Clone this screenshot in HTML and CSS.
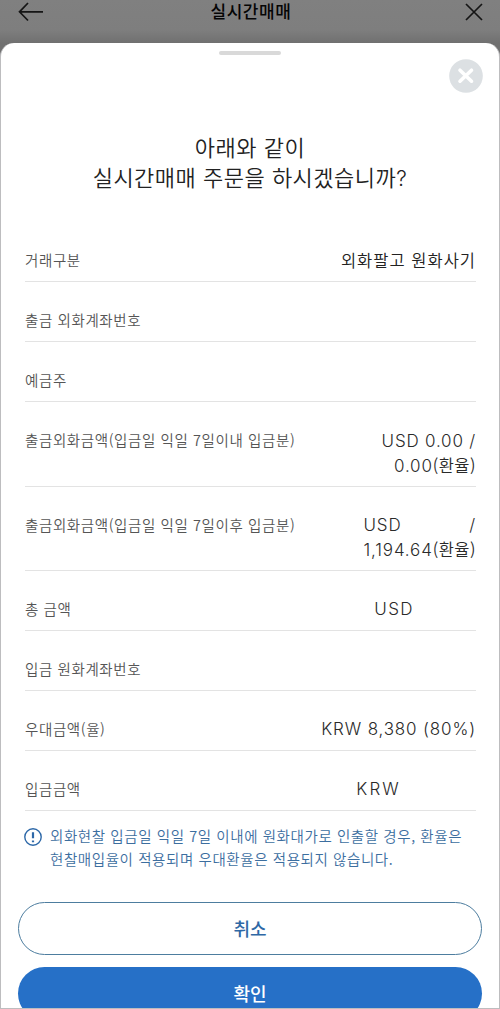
FILE: index.html
```html
<!DOCTYPE html>
<html lang="ko">
<head>
  <meta charset="UTF-8">
  <meta name="viewport" content="width=device-width, initial-scale=1.0">
  <title>실시간매매</title>
  <link rel="stylesheet" href="styles.css">
</head>
<body>

  <div class="screen">
    <header class="top-bar">
      <svg class="back-icon" width="26" height="20" viewBox="0 0 26 20"><path d="M10 1L1.5 9.8L10 18.5M1.5 9.8H25"/></svg>
      <h1>실시간매매</h1>
      <svg class="exit-icon" width="18" height="18" viewBox="0 0 18 18"><path d="M1 1L17 17M17 1L1 17"/></svg>
    </header>

    <div class="sheet">
      <div class="handle"></div>
      <button class="close-btn">
        <svg width="34" height="34" viewBox="0 0 34 34"><circle cx="17" cy="17" r="16.8"/><path d="M11 11.2L22.5 22.2M22.5 11.2L11 22.2"/></svg>
      </button>

      <h2>아래와 같이<br>실시간매매 주문을 하시겠습니까<span class="latin">?</span></h2>

      <dl class="order-list">
        <div class="row"><dt>거래구분</dt><dd class="kind">외화팔고 원화사기</dd></div>
        <div class="row"><dt>출금 외화계좌번호</dt><dd></dd></div>
        <div class="row"><dt>예금주</dt><dd></dd></div>
        <div class="row tall"><dt>출금외화금액(입금일 익일 7일이내 입금분)</dt><dd><span class="en">USD 0.00 /</span><br><span class="en">0.00</span>(환율)</dd></div>
        <div class="row tall"><dt>출금외화금액(입금일 익일 7일이후 입금분)</dt><dd><span class="pair en"><span>USD</span><span>/</span></span><span class="en rate">1,194.64</span>(환율)</dd></div>
        <div class="row"><dt>총 금액</dt><dd class="en total">USD</dd></div>
        <div class="row"><dt>입금 원화계좌번호</dt><dd></dd></div>
        <div class="row"><dt>우대금액(율)</dt><dd class="en krw">KRW 8,380 (80%)</dd></div>
        <div class="row"><dt>입금금액</dt><dd class="en deposit">KRW</dd></div>
      </dl>

      <div class="notice">
        <svg width="18" height="18" viewBox="0 0 18 18"><circle cx="9" cy="9" r="8.2"/><path d="M9 4.3V10.2M9 12.5V14.3"/></svg>
        <p>외화현찰 입금일 익일 7일 이내에 원화대가로 인출할 경우, 환율은<br>현찰매입율이 적용되며 우대환율은 적용되지 않습니다.</p>
      </div>

      <div class="buttons">
        <button class="btn cancel">취소</button>
        <button class="btn confirm">확인</button>
      </div>
    </div>
  </div>

</body>
</html>
```
FILE: styles.css
```css
* { box-sizing: border-box; margin: 0; padding: 0; }
body {
  font-family: 'Noto Sans CJK KR', sans-serif;
  background: #808080; color: #222;
  overflow: hidden;
}
button { font-family: inherit; border: none; background: none; }
svg { display: block; fill: none; }

.screen {
  height: 1009px; overflow: hidden;
  display: flex; flex-direction: column;
  background: linear-gradient(#808080 0, #7e7e7e 30px, #707070 43px, #707070 70px);
}
.top-bar {
  height: 43px; flex: none; padding: 0 17px 0 18px;
  display: grid; grid-template-columns: 26px 1fr 18px;
  align-items: start;
}
.top-bar svg { stroke: #151515; stroke-width: 1.7; }
.top-bar h1 {
  font-size: 17px; font-weight: 500; line-height: 21px; color: #050505;
  letter-spacing: 0.6px; text-align: center; padding-right: 7px;
}
.back-icon { margin-top: 2px; }
.exit-icon { margin-top: 3px; }

.sheet {
  position: relative; flex: 1; min-height: 0; overflow: hidden;
  background: #fff; border: 1px solid #bdbdbf; border-top: none;
  border-radius: 14px 14px 0 0;
  padding: 8px 17px 0;
}
.handle {
  width: 62px; height: 4px; margin: 0 auto;
  border-radius: 2px; background: #d9d9d9;
}
.close-btn { position: absolute; top: 16px; right: 16px; }
.close-btn circle { fill: #dce0e3; }
.close-btn path { stroke: #fff; stroke-width: 3.6; stroke-linecap: round; }

h2 {
  margin-top: 76px; text-align: center;
  font-size: 22px; font-weight: 350; line-height: 30px;
  letter-spacing: 0.5px;
}
.latin { font-family: Inter, sans-serif; font-weight: 300; font-size: 21px; }

.order-list { padding: 0 6px 0 7px; margin-top: 28px; }
.row {
  height: 60px; padding-top: 26px;
  display: flex; justify-content: space-between;
  border-bottom: 1px solid #e3e3e3;
}
.row.tall { height: 84.5px; }
.row dt {
  font-size: 14.5px; font-weight: 350; line-height: 24px;
  letter-spacing: 0.6px; color: #555; white-space: nowrap;
}
.row dd {
  font-size: 16.5px; font-weight: 350; line-height: 24px;
  letter-spacing: 0.5px; text-align: right; color: #2a2a2a; white-space: nowrap;
}
.row .kind { color: #222; letter-spacing: 1px; }
.en {
  font-family: Inter, 'Noto Sans CJK KR', sans-serif; font-weight: 300;
}
.row .en { font-size: 17px; letter-spacing: 0.8px; }
.pair { display: flex; justify-content: space-between; }
.row .rate { letter-spacing: 0.85px; }
.row .total { padding-right: 62px; letter-spacing: 1.4px; }
.row .deposit { padding-right: 75px; letter-spacing: 2.2px; }
.row .krw { letter-spacing: 0.85px; }

.notice {
  display: flex; gap: 8px; padding: 14px 7px 0;
  color: #3c6e9f;
}
.notice svg { flex: none; margin: 3px 0 0 -1px; stroke: #2d68a8; stroke-width: 1.4; }
.notice path { stroke-width: 2.2; }
.notice p {
  margin: -1px 0 1px;
  font-size: 14.5px; font-weight: 350; line-height: 23px;
  letter-spacing: 0.58px; white-space: nowrap;
}

.buttons { display: flex; flex-direction: column; gap: 12px; margin-top: 31px; }
.btn {
  height: 53px; flex: none; border-radius: 27px;
  font-size: 18px; font-weight: 500; line-height: 26px;
  padding-bottom: 2px;
}
.cancel { border: 1px solid #4d7d9f; color: #2f68a5; }
.confirm { background: #2670c7; color: #fff; }
```
